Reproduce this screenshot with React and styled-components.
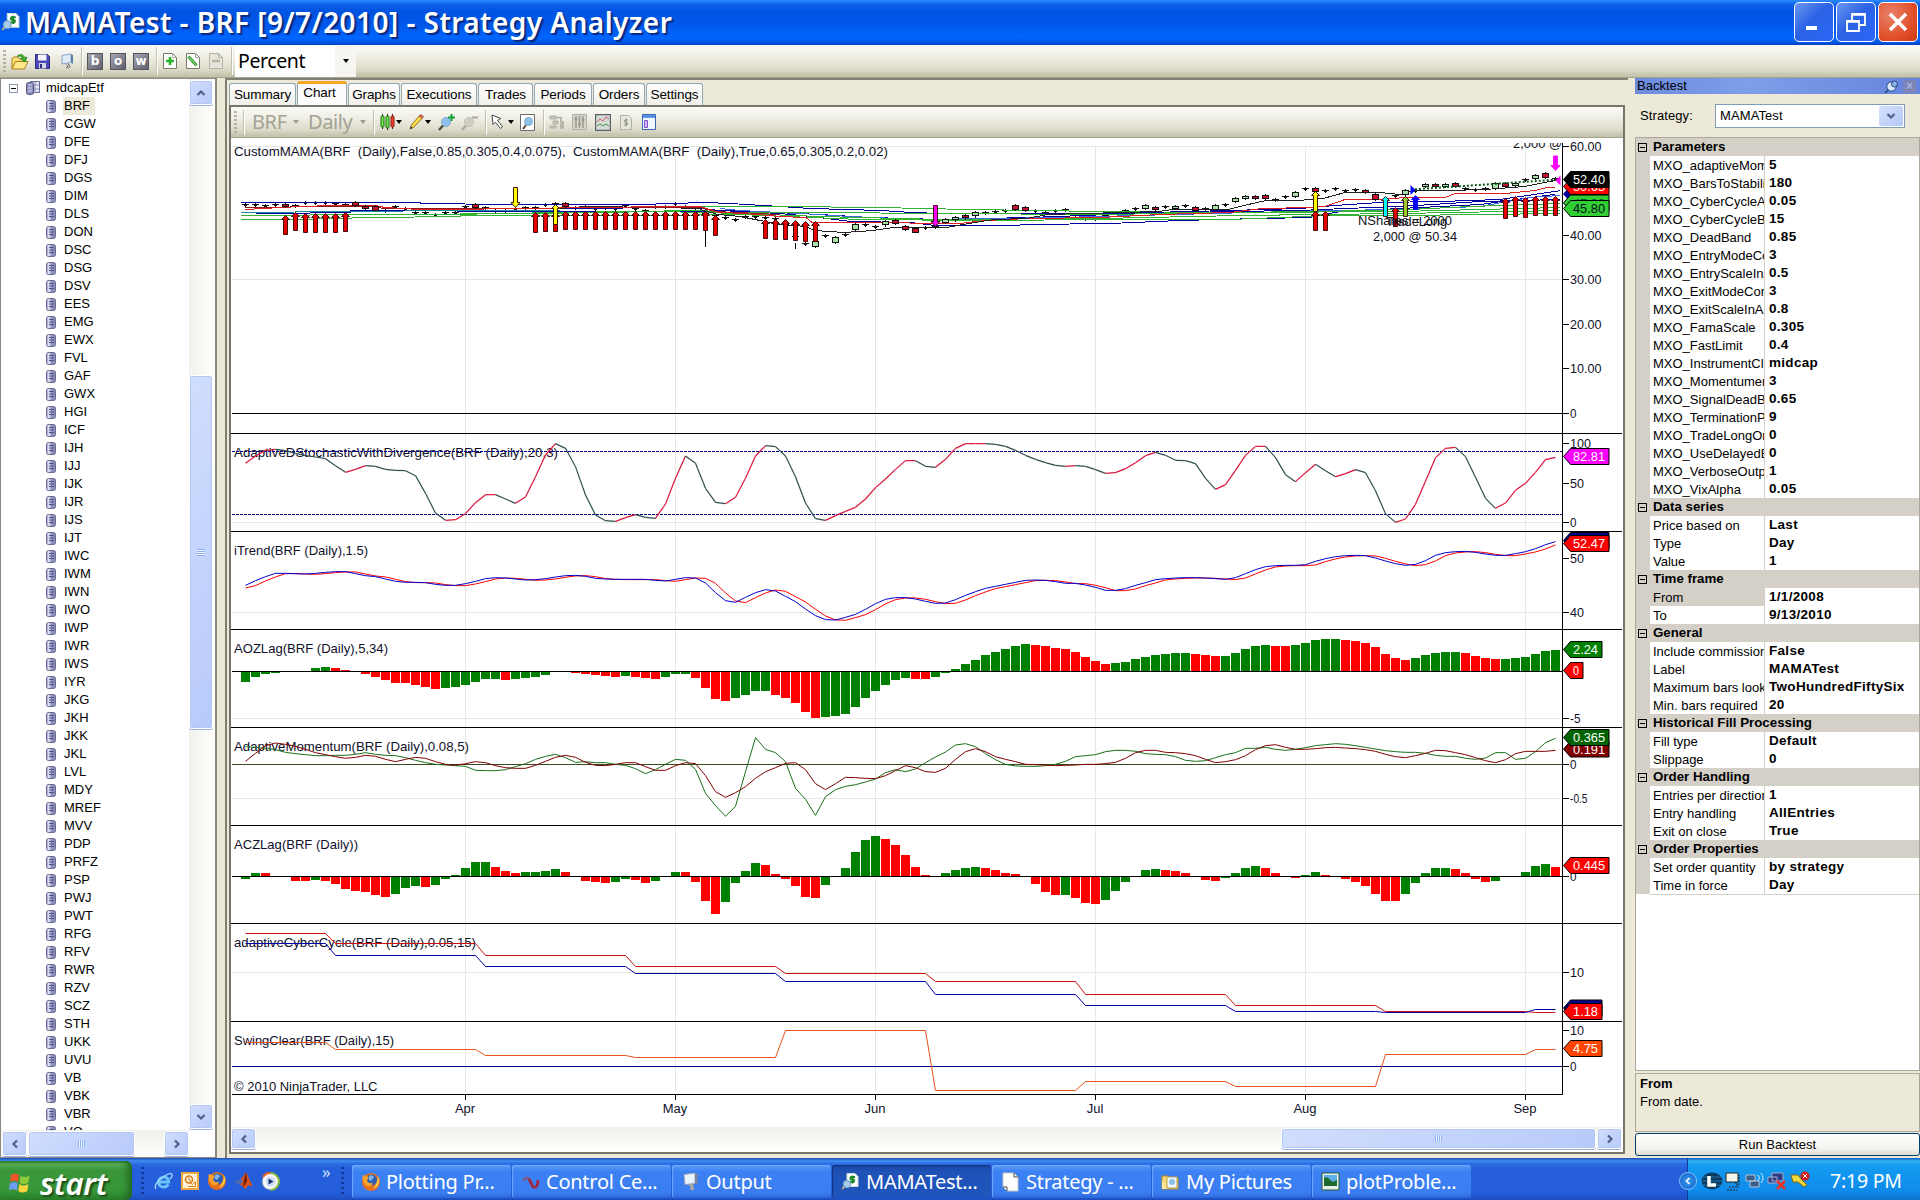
import React from "react"
import styled, { createGlobalStyle, css } from "styled-components"

const SANS = `"Liberation Sans", Arial, sans-serif`
const TAHOMA = `"Noto Sans", "Open Sans", sans-serif`

const GlobalStyle = createGlobalStyle`
  * {
    box-sizing: border-box;
  }

  body {
    margin: 0;
    overflow: hidden;
    background: #ece9d8;
    color: #000;
    font: 13px/18px ${SANS};
  }

  svg {
    display: block;
    flex: none;
  }
`

/* ---------- data ---------- */

const SYMBOLS = `BRF CGW DFE DFJ DGS DIM DLS DON DSC DSG DSV EES EMG EWX FVL GAF GWX HGI ICF
IJH IJJ IJK IJR IJS IJT IWC IWM IWN IWO IWP IWR IWS IYR JKG JKH JKK JKL LVL MDY MREF MVV PDP
PRFZ PSP PWJ PWT RFG RFV RWR RZV SCZ STH UKK UVU VB VBK VBR VO`.split(/\s+/)

const TABS = [
  ["Summary", 68],
  ["Chart", 51],
  ["Graphs", 53],
  ["Executions", 77],
  ["Trades", 56],
  ["Periods", 59],
  ["Orders", 53],
  ["Settings", 58],
]

const PROPERTIES = [
  {
    title: "Parameters",
    rows: [
      ["MXO_adaptiveMomentum", "5"],
      ["MXO_BarsToStabilize", "180"],
      ["MXO_CyberCycleAlpha", "0.05"],
      ["MXO_CyberCycleBars", "15"],
      ["MXO_DeadBand", "0.85"],
      ["MXO_EntryModeCode", "3"],
      ["MXO_EntryScaleInAmt", "0.5"],
      ["MXO_ExitModeControl", "3"],
      ["MXO_ExitScaleInAmt", "0.8"],
      ["MXO_FamaScale", "0.305"],
      ["MXO_FastLimit", "0.4"],
      ["MXO_InstrumentClass", "midcap"],
      ["MXO_Momentumenter", "3"],
      ["MXO_SignalDeadBand", "0.65"],
      ["MXO_TerminationPer", "9"],
      ["MXO_TradeLongOnly", "0"],
      ["MXO_UseDelayedEntry", "0"],
      ["MXO_VerboseOutput", "1"],
      ["MXO_VixAlpha", "0.05"],
    ],
  },
  {
    title: "Data series",
    rows: [
      ["Price based on", "Last"],
      ["Type", "Day"],
      ["Value", "1"],
    ],
  },
  {
    title: "Time frame",
    rows: [
      ["From", "1/1/2008"],
      ["To", "9/13/2010"],
    ],
  },
  {
    title: "General",
    rows: [
      ["Include commission", "False"],
      ["Label", "MAMATest"],
      ["Maximum bars look back", "TwoHundredFiftySix"],
      ["Min. bars required", "20"],
    ],
  },
  {
    title: "Historical Fill Processing",
    rows: [
      ["Fill type", "Default"],
      ["Slippage", "0"],
    ],
  },
  {
    title: "Order Handling",
    rows: [
      ["Entries per direction", "1"],
      ["Entry handling", "AllEntries"],
      ["Exit on close", "True"],
    ],
  },
  {
    title: "Order Properties",
    rows: [
      ["Set order quantity", "by strategy"],
      ["Time in force", "Day"],
    ],
  },
]

// indicator samples, one per bar, in thirds of a pixel
const STOCHASTIC = [
  115, 93, 76, 73, 77, 85, 92, 96, 101, 122, 142, 133, 122, 124, 133, 136, 137, 152, 205, 264, 286,
  284, 266, 233, 209, 209, 222, 235, 216, 155, 90, 56, 70, 125, 210, 270, 287, 289, 278, 269, 277,
  280, 237, 160, 93, 115, 190, 232, 236, 217, 160, 93, 62, 65, 93, 155, 234, 281, 286, 272, 259,
  247, 222, 188, 162, 133, 107, 107, 124, 127, 103, 70, 56, 56, 56, 58, 64, 76, 91, 103, 113, 121,
  124, 122, 124, 134, 145, 143, 131, 113, 92, 82, 91, 106, 107, 116, 160, 193, 179, 136, 91, 64, 64,
  98, 149, 170, 143, 118, 137, 155, 146, 134, 143, 197, 266, 292, 282, 238, 169, 98, 70, 67, 95,
  157, 220, 250, 234, 196, 175, 142, 104, 97,
]

const TREND = [
  481, 467, 455, 445, 445, 446, 447, 445, 442, 440, 440, 446, 452, 455, 462, 469, 472, 472, 473,
  478, 481, 481, 476, 469, 461, 458, 459, 462, 465, 464, 461, 456, 452, 451, 454, 460, 462, 463,
  463, 463, 463, 466, 468, 463, 458, 459, 474, 503, 527, 532, 517, 503, 494, 498, 514, 530, 552,
  572, 584, 585, 577, 568, 553, 536, 523, 518, 518, 522, 529, 535, 534, 524, 511, 500, 490, 484,
  478, 472, 466, 465, 466, 470, 475, 475, 480, 487, 496, 496, 491, 481, 473, 464, 461, 459, 458,
  458, 459, 461, 463, 458, 446, 434, 425, 422, 421, 421, 419, 409, 401, 395, 392, 391, 392, 399,
  408, 416, 421, 418, 407, 391, 383, 380, 379, 382, 387, 391, 391, 386, 380, 371, 359, 350,
]

const AOZ = [
  -31, -15, -7, -4, 0, 0, 4, 11, 14, 11, 5, 0, -7, -15, -25, -34, -34, -40, -46, -52, -49, -46, -40,
  -31, -22, -22, -23, -22, -19, -16, -10, 0, 0, -4, -7, -10, -13, -16, -13, -14, -19, -22, -16, -7,
  -7, -19, -49, -82, -88, -79, -70, -58, -58, -70, -79, -94, -121, -139, -136, -133, -127, -106,
  -79, -58, -40, -25, -19, -20, -20, -16, -4, 8, 23, 35, 50, 59, 68, 77, 83, 82, 77, 71, 68, 59, 44,
  32, 23, 26, 29, 38, 44, 50, 53, 56, 56, 53, 50, 47, 48, 56, 68, 77, 80, 79, 77, 80, 86, 95, 98,
  98, 95, 92, 86, 74, 53, 41, 35, 41, 50, 56, 59, 59, 56, 47, 41, 38, 39, 41, 44, 53, 62, 65,
]

const MOMENTUM = [
  965, 967, 970, 974, 982, 986, 989, 992, 992, 991, 991, 988, 983, 988, 991, 992, 998, 1006, 1013,
  1018, 1020, 1022, 1024, 1036, 1037, 1037, 1034, 1025, 1016, 1003, 994, 988, 998, 1012, 1010, 1013,
  1013, 1018, 1021, 1031, 1046, 1034, 1018, 1003, 1006, 1033, 1105, 1142, 1174, 1144, 1040, 938,
  973, 983, 1010, 1090, 1123, 1171, 1115, 1094, 1084, 1079, 1071, 1062, 1043, 1034, 1040, 1032,
  1013, 996, 981, 960, 956, 965, 986, 1004, 1018, 1023, 1024, 1024, 1022, 1018, 1009, 995, 992, 989,
  980, 976, 976, 979, 986, 988, 989, 995, 1006, 1009, 1007, 998, 989, 983, 970, 970, 967, 973, 976,
  973, 968, 962, 959, 956, 958, 962, 967, 972, 977, 980, 982, 982, 985, 991, 994, 994, 1000, 1003,
  999, 983, 983, 1003, 1000, 980, 953, 940,
]

const MOMENTUM_SIGNAL = [
  1009, 985, 962, 954, 958, 964, 973, 983, 989, 995, 1000, 997, 991, 994, 1003, 1010, 1003, 997,
  1000, 1010, 1018, 1021, 1016, 1010, 1013, 1022, 1028, 1030, 1030, 1021, 1009, 997, 991, 997, 1012,
  1021, 1022, 1018, 1013, 1013, 1025, 1036, 1036, 1022, 1013, 1016, 1052, 1100, 1117, 1103, 1085,
  1060, 1040, 1028, 1015, 1013, 1034, 1076, 1094, 1076, 1057, 1058, 1060, 1061, 1052, 1037, 1022,
  1028, 1040, 1042, 1030, 1003, 980, 971, 980, 995, 1003, 1010, 1018, 1019, 1020, 1022, 1021, 1020,
  1018, 1018, 1016, 1012, 1000, 983, 976, 976, 982, 983, 986, 992, 1003, 1013, 1010, 1004, 992, 974,
  962, 959, 967, 973, 973, 971, 968, 967, 969, 971, 974, 979, 988, 995, 998, 992, 985, 976, 977,
  983, 989, 998, 1007, 1013, 1004, 986, 979, 979, 979, 976,
]

const ACZ = [
  -7, 13, 12, 4, 0, -12, -12, -9, -13, -22, -37, -43, -46, -55, -61, -52, -34, -28, -31, -25, -7, 7,
  26, 44, 44, 31, 19, 13, 14, 14, 19, 25, 16, 0, -12, -16, -19, -16, -7, -10, -19, -13, 0, 16, 15,
  -16, -73, -112, -76, -19, 19, 43, 37, 10, -7, -28, -61, -64, -25, 4, 28, 76, 112, 124, 115, 97,
  67, 31, 7, 4, 13, 22, 28, 31, 28, 22, 13, 10, 0, -22, -46, -55, -54, -64, -79, -82, -70, -43, -16,
  4, 22, 25, 22, 19, 13, 0, -10, -12, -4, 13, 28, 34, 28, 13, 0, -4, 7, 16, 7, 0, -7, -16, -28, -52,
  -73, -73, -52, -19, 13, 28, 28, 25, 13, -7, -16, -13, 0, 4, 16, 34, 40, 31,
]

// stepped series: [first bar, level]
const CYCLE_RED = [[0, 355], [9, 385], [24, 421], [39, 455], [54, 475], [69, 499], [84, 539], [99, 572], [114, 590], [129, 592]]
const CYCLE_BLUE = [[0, 385], [9, 421], [24, 455], [39, 475], [54, 499], [69, 539], [84, 572], [99, 590], [114, 592], [129, 583]]
const SWING = [[0, 683], [9, 704], [24, 721], [39, 727], [54, 647], [69, 826], [84, 799], [99, 815], [114, 718], [129, 704]]

// doji mid prices, one per bar, null where a full candle is drawn
const DOJI = [
  204.7, 204, 205, 204.3, null, 205, 202.7, 202.3, 202, 203.7, 204.3, null, null, null, 210, 206.7,
  208.3, 212.7, 212.7, 214, 212.7, 212, 206.7, null, 207.7, 210, 210, 208, 207.7, 207, 204, 203.3,
  null, 207, 206.3, 208, 207.3, 208, 205.3, 208, 210.3, 206, 206.7, 203.3, 206.7, 210.7, 213, 215,
  217.3, 219.3, 216.3, 216, 217, 218, 224, 236, 243.3, null, 235.3, null, 234.7, null, 224.7, 226,
  null, null, null, null, 227.3, 226, null, null, null, null, 212.3, 211.3, 210.3, null, null,
  210.3, 212.3, 210.3, 209.3, 214, 218.7, 218.7, 215, 212.3, 210, 208.7, null, null, 206.7, null,
  205, null, 208.7, null, 204, null, null, null, null, 199.3, 196.7, null, 188.7, null, 190.3, 188.7,
  190.3, 189, null, null, null, 195, null, 190, null, null, null, null, 188.7, 189.7, 188.3, null,
  null, null, 179.7, null, null, 178.7,
]

// [bar, top, bottom, rising]
const CANDLES = [
  [4, 204, 206, 0], [11, 202.5, 205.5, 0], [12, 206.5, 208.7, 0], [13, 206, 209.5, 0],
  [23, 204, 207.3, 0], [32, 203.5, 206.5, 0], [57, 241.7, 246.7, 1], [59, 237.3, 242.7, 1],
  [61, 224.5, 229.5, 1], [64, 221.7, 225, 1], [65, 220.5, 223.7, 0], [66, 226.7, 229.5, 0],
  [67, 228, 231.7, 0], [70, 219.3, 222.3, 1], [71, 217.7, 220, 1], [72, 215.7, 218, 0],
  [73, 212.7, 216, 1], [77, 205.3, 209.7, 0], [78, 207.3, 210.3, 0], [90, 205.3, 208.3, 1],
  [91, 207.5, 209.7, 0], [93, 206.5, 208.7, 1], [95, 207.3, 210.3, 0], [97, 205.3, 209.3, 1],
  [99, 198.3, 201.7, 1], [100, 196.3, 198.7, 1], [101, 196.3, 198.7, 0], [102, 195.3, 198.7, 0],
  [105, 192.3, 196.7, 1], [107, 188.3, 191.7, 0], [112, 190.3, 192.3, 0], [113, 194.3, 199, 0],
  [116, 190.7, 195, 1], [118, 184.7, 186.7, 1], [119, 184.5, 186.7, 0], [120, 184.5, 186.7, 1],
  [121, 183.3, 186.3, 0], [125, 183.3, 188.3, 1], [126, 183.5, 186.5, 0], [127, 183.5, 185.7, 1],
  [129, 175.3, 178.7, 1], [130, 173.5, 177.3, 0],
]

const PRICE_LINES = [
  ["#0000a0", "241,202.5 420,202.5 421,203.5 509,204.5 640,204.5 705,202.5 730,203.5 780,206.5 811,208.5 881,210.5 912,212.5 942,213.5 1110,213.5 1230,210.5 1300,208.5 1335,205.5 1380,202.5 1440,201.5 1500,199.5 1560,190.7"],
  ["#0000a0", "560,208.5 690,207.5 720,210.5 780,213.5 811,216.5 851,221.5 911,222.5 935,225.5 1010,225.5 1031,224.5 1110,223.5 1180,220.5 1260,218.5 1310,217.5 1340,211.5 1400,208.5 1480,204.5 1555,194.3"],
  ["#0000a0", "241,212.5 270,213.5 350,212.5 351,210.5 560,211.5 700,211.5 731,210.5 820,214.5 870,217.5 940,219.5 1030,217.5 1110,214.5 1230,211.5 1300,210.5 1345,208.5 1400,206.5 1480,201.5 1560,199.5"],
  ["#1e8ca0", "241,212.5 350,211.5 460,210.5 560,210.5"],
  ["#4169e1", "720,208.5 740,210.5 800,213.5 850,216.5 920,219.5 1060,217.5 1290,211.5 1330,210.5 1400,209.5 1480,206.5 1530,197.5 1560,195.5"],
  ["#32b432", "688,206.5 731,206.5 780,206.5 881,207.5 921,208.5 971,209.5 1101,211.5 1223,212.5 1320,211.5 1410,209.5 1470,206.5 1560,203.5"],
  ["#32b432", "450,214.5 560,212.5 700,210.5 731,212.5 820,212.5 940,213.5 1100,214.5 1240,212.5 1400,211.5 1560,207.5"],
  ["#32b432", "241,215.5 380,214.5 540,213.5 660,211.5 740,213.5 820,216.5 940,219.5 1100,218.5 1240,215.5 1400,213.5 1560,210.5"],
  ["#32b432", "241,219.5 300,219.5 370,217.5 460,216.5 461,215.5 660,215.5 740,214.5 860,219.5 980,220.5 1110,219.5 1230,219.5 1330,215.5 1400,215.5 1560,213.5"],
  ["#222222", "560,208.5 585,206.5 660,207.5 700,208.5"],
  ["#8b1a1a", "245,207.5 280,207.5 300,206.5 370,206.5 385,208.5 550,208.5 565,207.5 700,207.5 715,211.5 780,214.5"],
  ["#e02020", "245,209.5 300,206.5 335,205.5 375,205.5 385,207.5 420,209.5 550,208.5 565,207.5 700,206.5 720,212.5 745,213.5 780,216.5 806,217.5 812,222.5 880,222.5 940,223.5 960,223.5 985,220.5 1030,218.5 1100,217.5 1160,214.5 1230,212.5 1262,208.5 1310,207.5 1325,206.5 1345,199.5 1380,199.5 1405,197.5 1445,197.5 1455,193.5 1505,193.5 1535,190.5 1547,187.5 1555,187.5"],
  ["#222222", "700,209.5 718,214.5 740,216.5 780,224.5 806,226.5 814,230.5 844,232.5 873,230.5 894,227.5 946,227.5 975,222.5 994,219.5 1026,218.5 1048,214.5 1083,213.5 1123,212.5 1158,211.5 1173,209.5 1228,209.5 1244,205.5 1266,200.5 1298,200.5 1323,198.5 1345,192.5 1380,192.5 1400,194.5 1415,190.5 1447,190.5 1485,189.5 1525,186.5 1555,180.5"],
]

// [bar, tip, tail, colour]
const UP_ARROWS = [
  [4, 215, 234.7], [5, 212.3, 230.7], [6, 213.3, 232.7], [7, 213.3, 232.7], [8, 213.3, 232.7],
  [9, 213.3, 232.7], [10, 212.3, 231.7], [29, 212.7, 232.7], [30, 212.7, 231.7], [31, 212, 231.7],
  ...Array.from({ length: 14 }, (_, n) => [32 + n, 211, 229.5]),
  [46, 211.5, 230], [47, 215.7, 235.5], [52, 219, 238.7], [53, 219.7, 239.5], [54, 219.3, 239.5],
  [55, 220.5, 240.7], [56, 221.5, 241.7], [57, 221.5, 241.7], [107, 211.5, 230.5],
  [108, 211.5, 230.5], [115, 207, 226.5], [126, 198.5, 218], [127, 196.3, 216.5],
  [128, 197.5, 217.5], [129, 196, 215.3], [130, 196, 215.3], [131, 196, 215.5],
  [31, 204.5, 224.3, "#ffff00"], [107, 191.7, 211.3, "#ffff00"], [114, 196, 216, "#00ffff"],
  [116, 196.5, 216, "#9acd32"], [117, 195.3, 209.3, "#0000ff"],
]

const MONTHS = [["Apr", 22], ["May", 43], ["Jun", 63], ["Jul", 85], ["Aug", 106], ["Sep", 128]]

const AXIS_LABELS = [
  ["60.00", 146.5], ["40.00", 235.5], ["30.00", 279.5], ["20.00", 324.5], ["10.00", 368.5],
  ["0", 413.5], ["100", 443.5], ["50", 483.5], ["0", 522.5], ["50", 558.5], ["40", 612.5],
  ["-5", 718.5], ["0", 764.5], ["-0.5", 798.5], ["0", 876.5], ["10", 972.5], ["10", 1030.5],
  ["0", 1066.5],
]

// [label, centre, right edge, fill, text colour]
const TAGS = [
  ["47.99", 203, 1609, "#32cd32", "#053"],
  ["45.80", 208.5, 1609, "#32cd32", "#012"],
  ["50.63", 186.5, 1609, "#ff0000", "#fff"],
  ["52.40", 179.5, 1609, "#000", "#fff"],
  ["82.81", 456.5, 1609, "#ff00ff", "#fff"],
  ["", 540.5, 1609, "#00008b", "#fff"],
  ["52.47", 543.5, 1609, "#ff0000", "#fff"],
  ["2.24", 649.5, 1602, "#008000", "#fff"],
  ["0", 670.5, 1583, "#ff0000", "#fff"],
  ["0.191", 749, 1609, "#800000", "#fff"],
  ["0.365", 737.5, 1609, "#006400", "#fff"],
  ["0.445", 865.5, 1609, "#ff0000", "#fff"],
  ["", 1008, 1602, "#00008b", "#fff"],
  ["1.18", 1011.5, 1602, "#ff0000", "#fff"],
  ["4.75", 1048.5, 1602, "#ff4500", "#fff"],
]

// [text, baseline, width]
const PANE_TITLES = [
  ["CustomMAMA(BRF\u00a0 (Daily),False,0.85,0.305,0.4,0.075),\u00a0 CustomMAMA(BRF\u00a0 (Daily),True,0.65,0.305,0.2,0.02)", 156, 654],
  ["AdaptiveDStochasticWithDivergence(BRF (Daily),20,3)", 457, 324],
  ["iTrend(BRF (Daily),1.5)", 555, 134],
  ["AOZLag(BRF (Daily),5,34)", 653, 154],
  ["AdaptiveMomentum(BRF (Daily),0.08,5)", 751, 235],
  ["ACZLag(BRF (Daily))", 849, 124],
  ["adaptiveCyberCycle(BRF (Daily),0.05,15)", 947, 242],
  ["SwingClear(BRF (Daily),15)", 1045, 160],
  ["© 2010 NinjaTrader, LLC", 1091, 143.5],
]

/* ---------- chart ---------- */

const barX = i => 245.5 + 10 * i
const snap = y => Math.floor(y) + 0.5
const toPoints = (values, top) => values.map((v, i) => `${barX(i)},${top + v / 3}`).join(" ")

const stepPoints = (steps, top) =>
  steps
    .map(([bar, level], n) => {
      const end = n + 1 < steps.length ? steps[n + 1][0] - 1 : 131
      const y = snap(top + level / 3)
      return `${barX(bar)},${y} ${barX(end)},${y}`
    })
    .join(" ")

function Histogram({ values, base }) {
  let rising = true
  return values.map((v, i) => {
    if (i > 0 && v !== values[i - 1]) rising = v > values[i - 1]
    if (v === 0) return null
    const h = Math.round(Math.abs(v) / 3)
    return (
      <rect
        key={i}
        x={barX(i) - 4.5}
        y={v > 0 ? base - h : base}
        width="9"
        height={h}
        fill={rising ? "#008000" : "#ff0000"}
      />
    )
  })
}

function Stochastic() {
  return STOCHASTIC.slice(1).map((v, i) => (
    <line
      key={i}
      x1={barX(i)}
      y1={425 + STOCHASTIC[i] / 3}
      x2={barX(i + 1)}
      y2={425 + v / 3}
      stroke={v <= STOCHASTIC[i] ? "#dc143c" : "#2f4f4f"}
      strokeWidth="1.2"
    />
  ))
}

function UpArrow({ bar, tip, tail, fill = "#e80000" }) {
  const x = barX(bar)
  const top = snap(tip)
  return (
    <path
      d={`M${x} ${top}l4 4h-2V${snap(tail)}h-4V${top + 4}h-2z`}
      fill={fill}
      stroke={fill === "#0000ff" ? fill : "#300"}
      strokeWidth="0.9"
    />
  )
}

function DownArrow({ bar, top, tip, fill, stroke = "#300" }) {
  const x = barX(bar)
  return (
    <path
      d={`M${x - 2} ${top}h4V${tip - 5}h2.5L${x} ${tip}l-4.5-5h2.5z`}
      fill={fill}
      stroke={stroke}
      strokeWidth="0.9"
    />
  )
}

function Tag({ label, y, right, fill, color }) {
  return (
    <g>
      <path d={`M1563.5 ${y}l7-8H${right}v16H1570.5z`} fill={fill} stroke="#000" />
      {label && (
        <text
          x="1573"
          y={y + 4.5}
          fill={color}
          textLength={right - 1573 - 4}
          lengthAdjust="spacingAndGlyphs"
        >
          {label}
        </text>
      )}
    </g>
  )
}

const ChartSvg = styled.svg`
  background: #fff;

  text {
    font: 13px ${SANS};
  }

  polyline {
    fill: none;
  }
`

function Chart() {
  return (
    <ChartSvg width="1391" height="989" viewBox="231 138 1391 989">
      <g stroke="#e9e8e0">
        {MONTHS.map(([name, bar]) => (
          <line key={name} x1={barX(bar)} x2={barX(bar)} y1="146" y2="1094" />
        ))}
        {[146.5, 279.5, 522.5, 612.5, 718.5, 798.5, 972.5].map(y => (
          <line key={y} x1="232" x2="1562" y1={y} y2={y} />
        ))}
      </g>

      <g fill="#10102a">
        {PANE_TITLES.map(([label, y, width]) => (
          <text key={label} x="234" y={y} textLength={width} lengthAdjust="spacingAndGlyphs">
            {label}
          </text>
        ))}
      </g>

      <g shapeRendering="crispEdges">
        {DOJI.map(
          (y, i) =>
            y && (
              <path
                key={i}
                d={`M${barX(i) - 3.5} ${snap(y)}h7M${barX(i) - 1.5} ${snap(y) + 1}h3M${barX(i)} ${snap(y) - 2}v4`}
                stroke="#111"
              />
            )
        )}
        <path d="M705.5 230v17M795.5 243v6" stroke="#000" />
        {PRICE_LINES.map(([color, points], i) => (
          <polyline key={i} points={points} stroke={color} />
        ))}
        {CANDLES.map(([bar, top, bottom, up]) => (
          <g key={bar} stroke="#111">
            <path d={`M${barX(bar)} ${top - 1.5}V${bottom + 1.5}`} />
            <rect
              x={barX(bar) - 3}
              y={snap(top)}
              width="6"
              height={Math.round(bottom - top)}
              fill={up ? "#a8e0a8" : "#c8102e"}
            />
          </g>
        ))}
      </g>
      <line x1="1415" y1="189.3" x2="1556" y2="179.7" stroke="#0a5c1a" strokeWidth="2" strokeDasharray="2 2" />
      {UP_ARROWS.map(([bar, tip, tail, fill], i) => (
        <UpArrow key={i} bar={bar} tip={tip} tail={tail} fill={fill} />
      ))}
      <DownArrow bar={27} top={187.5} tip={207.5} fill="#ffff00" />
      <DownArrow bar={69} top={205.5} tip={226.5} fill="#ff00ff" />
      <DownArrow bar={131} top={156} tip={170.5} fill="#ff00ff" stroke="#ff00ff" />
      <path d="M1410.5 185v10l5-5z" fill="#0000ff" />
      <path d="M1560.5 175.5v10l-5-5z" fill="#ff00ff" />

      <g fill="#10101a">
        <text x="1358" y="224.5" textLength="94" lengthAdjust="spacingAndGlyphs">NShares = 2000</text>
        <text x="1386" y="225.5" textLength="61" lengthAdjust="spacingAndGlyphs">TradeLong</text>
        <text x="1373" y="241" textLength="84" lengthAdjust="spacingAndGlyphs">2,000 @ 50.34</text>
        <text x="1513" y="147.5" textLength="49" lengthAdjust="spacingAndGlyphs">2,000 @</text>
      </g>
      <rect x="1505" y="138" width="58" height="5" fill="#fff" />

      <path d="M232 451.5H1562M232 514.5H1562" stroke="#00008b" strokeDasharray="3 1" />
      <Stochastic />

      <polyline points={toPoints([488, ...TREND.slice(0, -1)], 425.3)} stroke="#ff0000" />
      <polyline points={toPoints(TREND, 425)} stroke="#0000cd" />

      <Histogram values={AOZ} base={672} />
      <path d="M232 671.5H1562" stroke="#000" />

      <path d="M232 764.5H1562" stroke="#3c4a20" />
      <polyline points={toPoints(MOMENTUM, 425)} stroke="#1a6e1a" />
      <polyline points={toPoints(MOMENTUM_SIGNAL, 425)} stroke="#800000" />

      <Histogram values={ACZ} base={877} />
      <path d="M232 876.5H1562" stroke="#000" />

      <polyline points={stepPoints(CYCLE_RED, 815)} stroke="#d01010" />
      <polyline points={stepPoints(CYCLE_BLUE, 815)} stroke="#0000a8" />

      <path d="M232 1066.5H1562" stroke="#00008b" />
      <polyline points={stepPoints(SWING, 815)} stroke="#e8521a" />

      <g stroke="#000">
        <path d="M232 413.5H1562M232 1094.5H1562.5V143" fill="none" />
        {[433.5, 531.5, 629.5, 727.5, 825.5, 923.5, 1021.5].map(y => (
          <line key={y} x1="231" x2="1622" y1={y} y2={y} />
        ))}
        {AXIS_LABELS.map(([, y]) => (
          <line key={y} x1="1562" x2="1569" y1={y} y2={y} />
        ))}
        {MONTHS.map(([name, bar]) => (
          <line key={name} x1={barX(bar)} x2={barX(bar)} y1="1094" y2="1100" />
        ))}
      </g>
      <g fill="#10102a">
        {AXIS_LABELS.map(([label, y]) => (
          <text
            key={y}
            x="1570"
            y={y + 4.5}
            textLength={label.length > 1 ? label.replace(/[.-]/g, "").length * 7 + (/[.-]/.test(label) ? 3.5 : 0) : 6.5}
            lengthAdjust="spacingAndGlyphs"
          >
            {label}
          </text>
        ))}
        {MONTHS.map(([name, bar]) => (
          <text key={name} x={barX(bar) - 0.5} y="1113" textAnchor="middle">
            {name}
          </text>
        ))}
      </g>
      <path d="M1563 194l9-10v20z" fill="#0000a0" />
      {TAGS.map(([label, y, right, fill, color]) => (
        <Tag key={`${label}${y}`} label={label} y={y} right={right} fill={fill} color={color} />
      ))}
    </ChartSvg>
  )
}

/* ---------- icons ---------- */

const DbIcon = () => (
  <svg width="10" height="13" viewBox="0 0 10 13">
    <rect x=".5" y=".5" width="9" height="12" rx="2" fill="#8d8fc0" stroke="#6a6a8c" />
    <rect x="1.5" y="1" width="3" height="11" fill="#d8daf4" />
    <path d="M3 3.5h5M3 6h5M3 8.5h5" stroke="#54557e" />
  </svg>
)

const FolderDbIcon = () => (
  <svg width="14" height="14" viewBox="0 0 14 14">
    <path d="M4.5.5h9v11h-9z" fill="#e6e8f6" stroke="#6a6a8c" />
    <path d="M9 1v11M4 4h9M4 8h9" stroke="#8d8fb8" />
    <rect x=".5" y="1.5" width="7" height="12" rx="2" fill="#8d8fc0" stroke="#55567a" />
    <path d="M2 4h4M2 7h4M2 10h4" stroke="#d8daf4" />
  </svg>
)

const OpenIcon = () => (
  <svg width="18" height="17" viewBox="0 0 18 17">
    <path d="M1 16V5.5l2-1.5h4l1.5 2H14v3" fill="#fbe27a" stroke="#a87e16" />
    <path d="M1 16l3.5-7.5H17L13.5 16z" fill="#ffe98a" stroke="#a87e16" />
    <path d="M6 3.5C9 .5 12 1 13.5 4.5L16 4l-2 5-4.5-3 2-.8C10 3 8.500 2.500 6 3.500z" fill="#3cb52c" stroke="#1c7a12" strokeWidth=".7" />
  </svg>
)

const SaveIcon = () => (
  <svg width="15" height="15" viewBox="0 0 15 15">
    <path d="M.5.5h12l2 2v12H.5z" fill="#4b49b8" stroke="#2b2a7c" />
    <path d="M3 .5h8.500v6H3z" fill="#f4f4ff" />
    <path d="M4 9h7v5.500H4z" fill="#d5d6e6" />
    <path d="M5 10h2v4H5z" fill="#2b2a7c" />
  </svg>
)

const MonitorIcon = () => (
  <svg width="14" height="16" viewBox="0 0 14 16">
    <path d="M2 2.500L11 1v8.500L2 11z" fill="#dfeafa" stroke="#8aa4c4" />
    <path d="M11 1l2 1v9l-2-1.500z" fill="#5a7ea8" />
    <path d="M6 11.500l2 2-2 1.500M8 10.500l2 3-2 2" fill="none" stroke="#555" />
  </svg>
)

const DocIcon = ({ kind }) => (
  <svg width="14" height="16" viewBox="0 0 14 16">
    <path d="M.5.5h9l4 4v11H.5z" fill={kind === "minus" ? "#e6e5da" : "#fff"} stroke={kind === "minus" ? "#b4b3a6" : "#77776c"} />
    <path d="M9.500.5v4h4" fill="none" stroke="#aaa" />
    {kind === "plus" && <path d="M7 4v8M3 8h8" stroke="#28b428" strokeWidth="2.600" />}
    {kind === "edit" && <path d="M2.500 3.500l8 9" stroke="#2e9a2e" strokeWidth="3" />}
    {kind === "edit" && <path d="M3 4l7 8" stroke="#a8e890" />}
    {kind === "minus" && <path d="M3 8h8" stroke="#b4b3a6" strokeWidth="2.600" />}
  </svg>
)

const CandlesIcon = () => (
  <svg width="15" height="18" viewBox="0 0 15 18">
    <path d="M2.500 1v15M7.500 1v16M12.500 1v15" stroke="#222" />
    <rect x="1" y="3" width="3" height="11" rx="1" fill="#6fe84a" stroke="#1c6a12" />
    <rect x="6" y="3" width="3" height="12" rx="1" fill="#6fe84a" stroke="#1c6a12" />
    <rect x="11" y="3" width="3" height="11" rx="1" fill="#f0402c" stroke="#8a1a10" />
  </svg>
)

const PencilIcon = () => (
  <svg width="15" height="16" viewBox="0 0 15 16">
    <path d="M1 15l1.500-4L10.500 1.500l3 2.500L5 13z" fill="#ffd84a" stroke="#7a5a0c" strokeWidth=".8" />
    <path d="M10 2l3 2.500 1.500-2L12 .5z" fill="#e86a50" stroke="#7a3a2c" strokeWidth=".6" />
    <path d="M1 15l.8-2.500L3.500 14z" fill="#222" />
  </svg>
)

const LensIcon = ({ sign, off }) => (
  <svg width="17" height="17" viewBox="0 0 17 17">
    <path d="M1 16l4.500-5" stroke={off ? "#aaa99c" : "#54483c"} strokeWidth="2.400" />
    <circle cx="8" cy="8" r="4.500" fill={off ? "#d0cfc4" : "#8fc0e8"} stroke={off ? "#c4c3b8" : "#7cacd0"} />
    <path d={sign === "+" ? "M13.500 0v7M10 3.500h7" : "M11 3.500h6"} stroke={off ? "#aaa99c" : "#12a03c"} strokeWidth="2" />
  </svg>
)

const CursorIcon = () => (
  <svg width="14" height="16" viewBox="0 0 14 16">
    <path d="M1 1l1 9.500 2.300-2.300L9.500 14.500l2-1.800L6.500 6.500l3.300-2z" fill="#fff" stroke="#444" />
  </svg>
)

const DataBoxIcon = () => (
  <svg width="15" height="17" viewBox="0 0 15 17">
    <path d="M.5.5h14v16H.5z" fill="#fff" stroke="#6a6a6a" />
    <path d="M3 15l3-4" stroke="#54483c" strokeWidth="2" />
    <circle cx="8.500" cy="7.500" r="4" fill="#8fc0e8" stroke="#7cacd0" />
  </svg>
)

const AlignIcon = () => (
  <svg width="15" height="16" viewBox="0 0 15 16">
    <path d="M1 2h6v3H1zM4 7h5v3H4zM1 12h6v2H1z" fill="#c6c5ba" stroke="#b0afa4" />
    <path d="M7 3.500h5V14h2V7" fill="none" stroke="#b0afa4" strokeWidth="1.600" />
  </svg>
)

const SlidersIcon = () => (
  <svg width="15" height="16" viewBox="0 0 15 16">
    <path d="M.5.5h14v15H.5z" fill="#d6d5ca" stroke="#b0afa4" />
    <path d="M4 2v12M7.500 2v12M11 2v12M2.500 5h3M6 10h3M9.500 6h3" stroke="#96958a" strokeWidth="1.400" />
  </svg>
)

const GraphIcon = () => (
  <svg width="16" height="17" viewBox="0 0 16 17">
    <path d="M.5.5h15v16H.5z" fill="#d4dad6" stroke="#5c6268" strokeWidth="1.400" />
    <path d="M2 8l3-3 3 2 3-4 3 2" fill="none" stroke="#d85a6a" />
    <path d="M2 12l3-2 3 2 3-2 3 2" fill="none" stroke="#3c9a4c" />
  </svg>
)

const DollarIcon = () => (
  <svg width="12" height="15" viewBox="0 0 12 15">
    <path d="M.5.5h8l3 3v11H.5z" fill="#e8e7dc" stroke="#b0afa4" />
    <path d="M8 5H5q-1.500 1.200 0 2.500h2q1.500 1.200 0 2.500H4M6 3.500v8" fill="none" stroke="#8c8b80" />
  </svg>
)

const LayoutIcon = () => (
  <svg width="14" height="16" viewBox="0 0 14 16">
    <path d="M.5.5h13v15H.5z" fill="#f2f6ff" stroke="#3c64b4" />
    <path d="M1 2.500h12" stroke="#3c82e0" strokeWidth="2.500" />
    <path d="M2.500 6.500h3v7h-3z" fill="#d0b8f8" stroke="#7a50d0" />
  </svg>
)

const AppIcon = ({ size = 17 }) => (
  <svg width={size} height={size} viewBox="0 0 17 17">
    <path d="M5 .5h8l3 3v10H5z" fill="#fff" stroke="#d4dcd4" />
    <path d="M13 4h-4q-1.500 1.500 0 2.500h2.500q1.500 1.300 0 2.500H8M10.500 2.500v8" fill="none" stroke="#1c8a2c" strokeWidth="1.800" />
    <path d="M0 16l3-3" stroke="#b8a890" strokeWidth="2" />
    <circle cx="5" cy="11" r="3.700" fill="#a8cdea" stroke="#6a9cc4" />
  </svg>
)

const FirefoxIcon = () => (
  <svg width="20" height="20" viewBox="0 0 20 20">
    <circle cx="10" cy="10" r="9" fill="#e8701a" />
    <circle cx="10.500" cy="8" r="5.500" fill="#2c5fb4" />
    <path d="M8 4q3-2 5 1l-3 4-2-1z" fill="#7cb4ec" />
    <path d="M1.500 3q2.500 1 4.500 1l2 2-2 2q1 4 6 3-1 4-6 3Q1 11 1.500 3z" fill="#f8a02c" />
    <path d="M17 4q4 9-5 13 5-6 5-13z" fill="#fcd04a" />
  </svg>
)

const IeIcon = () => (
  <svg width="19" height="19" viewBox="0 0 19 19" fill="none">
    <path d="M14.500 12.500Q12 15.500 8.500 15 4.500 14 4.500 10T9.500 5q5 .3 5.200 5H6" stroke="#6cc4fa" strokeWidth="2.800" />
    <path d="M2 17Q-1 13 8 6t10-3q1 1-2 4" stroke="#a8dcfc" strokeWidth="1.300" />
  </svg>
)

const OutlookIcon = () => (
  <svg width="18" height="18" viewBox="0 0 18 18">
    <path d="M1 1h16v16H1z" fill="#fff4d8" stroke="#f0a83c" strokeWidth="2" />
    <circle cx="8" cy="7.500" r="3.500" fill="none" stroke="#d87a10" strokeWidth="1.500" />
    <path d="M8 5.500v2.500l2 1M7 14.500h7.500v-5M8 10l3.500 2.500L14 10" fill="none" stroke="#d87a10" />
  </svg>
)

const MatlabIcon = () => (
  <svg width="18" height="18" viewBox="0 0 18 18">
    <path d="M0 10l6-3 5-7 7 15-4-2-4 4-4-4z" fill="#d8501a" />
    <path d="M0 10l6-3 2 2-3 4z" fill="#4a6cb8" />
    <path d="M11 0l1 9-4 7 1-8z" fill="#6a1a10" />
  </svg>
)

const MediaIcon = () => (
  <svg width="19" height="19" viewBox="0 0 19 19">
    <circle cx="9.500" cy="9.500" r="8.500" fill="#f4f6fa" stroke="#5a86a8" />
    <path d="M9.500 1a8.500 8.500 0 010 17" fill="none" stroke="#88b83c" strokeWidth="2" />
    <path d="M9.500 1A8.500 8.500 0 002 5" fill="none" stroke="#e8641a" strokeWidth="2" />
    <circle cx="9.500" cy="9.500" r="5" fill="#d0def4" />
    <path d="M7.500 6.500v6l5-3z" fill="#14306c" />
  </svg>
)

const NinjaIcon = () => (
  <svg width="18" height="18" viewBox="0 0 18 18" fill="none">
    <path d="M2 8q1-5 5-2l2 4" stroke="#7c5a8c" strokeWidth="2.500" />
    <path d="M7 6l4 8q5 2 5-7" stroke="#a02a44" strokeWidth="2.800" />
  </svg>
)

const OutputIcon = () => (
  <svg width="17" height="19" viewBox="0 0 17 19">
    <path d="M2 2.500L13 1v10.500L3 12.500z" fill="#eaf2fc" stroke="#9aa6b8" />
    <path d="M13 1l2.500 1v9.500L13 11.500z" fill="#7a8698" />
    <path d="M6 12.500l3 2.500-1 3h4l-1-6z" fill="#b0a898" />
  </svg>
)

const PageIcon = () => (
  <svg width="17" height="20" viewBox="0 0 17 20">
    <path d="M1 1h11l4 4v14H5l-4-4z" fill="#fff" stroke="#c8c8c0" />
    <path d="M12 1v4h4M1 15h4v4" fill="none" stroke="#444" />
  </svg>
)

const PicturesIcon = () => (
  <svg width="19" height="18" viewBox="0 0 19 18">
    <path d="M1 3h6l2 2h8v11H1z" fill="#f8d878" stroke="#b08a2c" />
    <path d="M6 4h10v11H6z" fill="#eef6ff" stroke="#c4a048" />
    <circle cx="11" cy="9" r="3" fill="#8cc0e8" />
    <path d="M1 7l5 9h-5z" fill="#fce8a0" />
  </svg>
)

const ImageIcon = () => (
  <svg width="19" height="19" viewBox="0 0 19 19">
    <path d="M1 1h17v17H1z" fill="#e4f0e8" stroke="#2c5a3c" />
    <path d="M3 3h13v11H3z" fill="#5cb0e8" />
    <path d="M3 6q4-2 6 2l3 2 4-2v6H3z" fill="#1c6a2c" />
  </svg>
)

const WindowsFlag = () => (
  <svg width="24" height="24" viewBox="0 0 24 24">
    <path d="M3 4q4-3 8 0l-1 7q-4-3-8 0z" fill="#f0562c" />
    <path d="M12.500 4.500q4 3 9 0l-1 7q-5 3-9 0z" fill="#8ccc3c" />
    <path d="M1.800 12.500q4-3 8 0l-1 7q-4-3-8 0z" fill="#6c9cf4" />
    <path d="M11.300 13q4 3 9 0l-1 7q-5 3-9 0z" fill="#fcd43c" />
  </svg>
)

const Chevron = ({ dir }) => {
  const turn = { up: 0, right: 90, down: 180, left: 270 }[dir]
  return (
    <svg width="10" height="10" viewBox="0 0 10 10">
      <path d="M1.500 7L5 3.500 8.500 7" fill="none" stroke="#4d6185" strokeWidth="2.200" transform={`rotate(${turn} 5 5)`} />
    </svg>
  )
}

const PinIcon = () => (
  <svg width="15" height="15" viewBox="0 0 15 15">
    <path d="M1 14l4-4" stroke="#23427c" strokeWidth="1.500" />
    <circle cx="7.500" cy="7.500" r="4.700" fill="#d8e8fc" stroke="#23427c" />
    <circle cx="10.500" cy="5" r="3" fill="#8ab4ec" stroke="#23427c" />
  </svg>
)

/* ---------- layout ---------- */

const Screen = styled.div`
  display: flex;
  flex-direction: column;
  width: 1920px;
  height: 1200px;
`

const TitleBar = styled.div`
  display: flex;
  align-items: center;
  flex: none;
  height: 45px;
  padding: 0 2px 1px 2px;
  background: linear-gradient(#2a8cff 0, #0b5fe8 5px, #0053e0 12px, #0058ec 26px, #0066ff 38px, #0059e8 42px, #003fc0 45px);
`

const WindowTitle = styled.h1`
  flex: 1;
  margin: 0 0 1px 5px;
  color: #fff;
  font: 600 28px/40px ${TAHOMA};
  letter-spacing: 0.45px;
  text-shadow: 2px 2px 1px #0a2a80;
  white-space: nowrap;
`

const WindowButton = styled.div`
  display: flex;
  align-items: center;
  justify-content: center;
  width: 40px;
  height: 40px;
  margin-left: 2px;
  border: 1.5px solid #fff;
  border-radius: 5px;
  background: ${p =>
    p.$close
      ? "radial-gradient(circle at 30% 30%, #e8826a, #e2512c 60%, #c83810)"
      : "linear-gradient(135deg, #6a96f0, #2c62e4 45%, #2a68f8)"};
`

const Toolbar = styled.div`
  display: flex;
  align-items: center;
  flex: none;
  height: ${p => p.$height}px;
  padding-left: ${p => p.$pad}px;
  background: linear-gradient(#fbfaf6, #f0efe6 35%, #dddccb 75%, #c0bfa6);
  border-bottom: 1px solid #a5a48c;
`

const Slot = styled.div`
  flex: none;
  width: ${p => p.$w}px;
  margin-left: ${p => p.$ml}px;
`

const Grip = styled.div`
  width: 3px;
  height: 23px;
  background: repeating-linear-gradient(#b4b2a0 0 2px, transparent 2px 4px);
`

const Separator = styled.div`
  width: 2px;
  height: ${p => p.$h || 28}px;
  margin-left: ${p => p.$ml}px;
  border-left: 1px solid #c2c1ae;
  background: #fff;
`

const LetterKey = styled.div`
  width: 16px;
  height: 17px;
  margin-left: ${p => p.$ml}px;
  border: 1px solid #54555e;
  background: linear-gradient(135deg, #a6a7b0, #5e5f70);
  color: #fff;
  font: bold 12px/14px "DejaVu Sans", sans-serif;
  text-align: center;
`

const PercentCombo = styled.div`
  display: flex;
  align-items: center;
  justify-content: space-between;
  width: 121px;
  height: 32px;
  margin-left: 2px;
  padding: 0 7px 0 3px;
  background: linear-gradient(90deg, #fff 100px, #f6f5ef 100px);
  font: 19.5px/30px ${TAHOMA};
  letter-spacing: -0.4px;
`

const Arrow = styled.i`
  width: 0;
  margin-left: ${p => p.$ml || 0}px;
  border: 3.5px solid transparent;
  border-top: 4px solid ${p => (p.$off ? "#9d9c8e" : "#000")};
  border-bottom: 0;
`

const DimLabel = styled.span`
  width: ${p => p.$w}px;
  margin-left: ${p => p.$ml}px;
  color: #a3a294;
  font: 20px/28px ${TAHOMA};
  letter-spacing: -0.4px;
  white-space: nowrap;
`

const Body = styled.div`
  display: flex;
  flex: 1;
  min-height: 0;
`

const TreePanel = styled.div`
  display: grid;
  grid-template: 1051px 27px / 188px 26px;
  width: 217px;
  border: 1px solid #8a8a80;
  border-width: 1px 2px 1px 1px;
  background: #fff;
`

const TreeList = styled.div`
  overflow: hidden;
`

const TreeRoot = styled.div`
  display: flex;
  align-items: center;
  height: 18px;
  padding-left: 8px;

  svg {
    margin: 0 6px 0 8px;
  }
`

const Toggle = styled.span`
  width: 9px;
  height: 9px;
  border: 1px solid ${p => (p.$dark ? "#000" : "#8a98ac")};

  &::after {
    content: "";
    display: block;
    height: 1px;
    margin: 3px 1px 0;
    background: #000;
  }
`

const TreeItem = styled.div`
  display: flex;
  align-items: center;
  height: 18px;
  padding-left: 45px;

  span {
    margin-left: 7px;
    padding: 0 5px 0 1px;
    background: ${p => (p.$selected ? "#ece9d8" : "none")};
  }
`

const ScrollTrack = styled.div`
  display: flex;
  flex-direction: ${p => (p.$vertical ? "column" : "row")};
  align-items: stretch;
  min-width: 0;
  padding: ${p => (p.$vertical ? "1px 2px 1px 0" : "1px 0")};
  background: ${p => (p.$vertical ? "linear-gradient(90deg, #f3f1ec, #fefefb)" : "linear-gradient(#f0efea, #fefefb)")};
`

const ScrollPart = styled.div`
  display: flex;
  align-items: center;
  justify-content: center;
  flex: none;
  width: ${p => (p.$w ? `${p.$w}px` : "auto")};
  height: ${p => (p.$h ? `${p.$h}px` : "auto")};
  margin-top: ${p => p.$mt || 0}px;
  margin-left: ${p => p.$ml || 0}px;
  border: 1px solid #fff;
  border-radius: 3px;
  background: linear-gradient(135deg, #d0defe, #b8cafa);
  box-shadow: inset 0 0 0 1px #b4c8f4, 0 1px 0 #98b0e0;
`

const Ridges = styled.span`
  width: ${p => (p.$vertical ? 8 : 7)}px;
  height: 7px;
  background: repeating-linear-gradient(${p => (p.$vertical ? "0deg" : "90deg")}, #8cb0f8 0 1px, #eef4fe 1px 2px);
`

const Spacer = styled.div`
  flex: 1;
`

const Splitter = styled.div`
  width: 8px;
  background: #ece9d8;
`

const ChartArea = styled.div`
  display: flex;
  flex-direction: column;
  width: 1403px;
  padding: 1px 0 0 2px;
  border-left: 2px solid #808074;
  border-top: 2px solid #808074;
`

const TabStrip = styled.div`
  display: flex;
  align-items: flex-end;
  height: 24px;
`

const Tab = styled.div`
  width: ${p => p.$w - 1}px;
  height: ${p => (p.$active ? 24 : 22)}px;
  margin-right: 1px;
  border: 1px solid #91a7b4;
  border-bottom: 0;
  border-radius: 3px 3px 0 0;
  background: linear-gradient(#fff, #f0efe8);
  font-size: 13.5px;
  line-height: 22px;
  text-align: center;
  letter-spacing: -0.1px;
  white-space: nowrap;

  ${p =>
    p.$active &&
    css`
      padding-right: 5px;
      border-top: 3px solid #f5a623;
      background: #fcfcfe;
      line-height: 17px;
    `}
`

const ChartFrame = styled.div`
  display: flex;
  flex-direction: column;
  width: 1396px;
  height: 1049px;
  border: 2px solid #75756b;
  background: #fff;
`

const HorizontalScroll = styled(ScrollTrack)`
  height: 23px;
  width: 1391px;
`

const SidePanel = styled.div`
  display: flex;
  flex-direction: column;
  width: 285px;
  margin-left: 7px;
`

const PanelHeader = styled.div`
  display: flex;
  align-items: center;
  gap: 4px;
  height: 16px;
  padding: 0 4px 0 2px;
  background: linear-gradient(90deg, #6d8ce0, #7d9fe8 40%, #6584de);
`

const CloseBox = styled.span`
  width: 13px;
  height: 13px;
  background: #7d85b8;
  color: #aab4dc;
  font: bold 12px/13px ${SANS};
  text-align: center;
`

const StrategyRow = styled.div`
  display: flex;
  align-items: center;
  height: 43px;
  padding-left: 5px;
`

const StrategyLabel = styled.span`
  width: 75px;
  letter-spacing: 0.1px;
`

const Select = styled.div`
  display: flex;
  align-items: center;
  justify-content: space-between;
  width: 190px;
  height: 24px;
  padding: 1px 1px 1px 4px;
  border: 1px solid #7f9db9;
  background: #fff;
  letter-spacing: 0.1px;

  span {
    display: flex;
    align-items: center;
    justify-content: center;
    width: 24px;
    height: 20px;
    border-radius: 2px;
    background: linear-gradient(135deg, #d4e0fd, #b4c8f6);
  }
`

const PropertyGrid = styled.div`
  height: 934px;
  border: 1px solid #aca899;
  background: #fff;
`

const Category = styled.div`
  display: flex;
  align-items: center;
  gap: 6px;
  height: 18px;
  padding-left: 2px;
  background: #d4d0c8;
  font-weight: bold;
  font-size: 13.3px;
`

const PropertyRow = styled.div`
  display: grid;
  grid-template-columns: 14px 115px 1fr;
  height: 18px;
  background: #d4d0c8;
`

const PropertyName = styled.div`
  overflow: hidden;
  padding-left: 3px;
  border-right: 1px solid #d4d0c8;
  border-bottom: 1px solid #d4d0c8;
  background: ${p => (p.$selected ? "#d4d0c8" : "#fff")};
  line-height: 19px;
  white-space: nowrap;
`

const PropertyValue = styled.div`
  padding-left: 4px;
  border-bottom: 1px solid #d4d0c8;
  background: #fff;
  font-weight: bold;
  font-size: 13.5px;
  letter-spacing: 0.3px;
`

const HelpBox = styled.div`
  height: 59px;
  margin: 2px 0 1px;
  padding: 1px 4px;
  border: 1px solid #aca899;
`

const RunButton = styled.button`
  height: 23px;
  padding: 0;
  border: 1px solid #003c74;
  border-radius: 3px;
  background: linear-gradient(#fff, #f4f3ee 70%, #dedbd0);
  color: #000;
  font: 13px ${SANS};
`

const TaskbarRoot = styled.div`
  display: flex;
  flex: none;
  height: 42px;
  background: linear-gradient(#1c4fb4 0, #3f8cf3 3px, #2a6ae0 6px, #245edb 12px, #245edb 34px, #1d4ec0 42px);
`

const StartButton = styled.div`
  display: flex;
  align-items: center;
  width: 132px;
  height: 39px;
  margin-top: 3px;
  padding: 5px 0 0 8px;
  gap: 8px;
  border-radius: 0 6px 6px 0;
  background: linear-gradient(#2c7a2c 0, #58b058 3px, #3a963a 9px, #389838 28px, #2c842c);
  box-shadow: inset -6px 0 8px -3px #1c5c1c;
  color: #fff;
  font: italic 600 31px/30px ${TAHOMA};
  letter-spacing: -0.3px;
  text-shadow: 2px 2px 2px #1c4a1c;
`

const QuickLaunch = styled.div`
  display: flex;
  align-items: center;
  width: 220px;
  padding: 4px 0 0 9px;
  color: #cfe2ff;

  svg {
    margin-right: 8px;
  }

  > div + svg {
    margin-left: 10px;
  }
`

const DarkGrip = styled.div`
  width: 3px;
  height: 28px;
  background: repeating-linear-gradient(#143a9c 0 2px, transparent 2px 5px);
`

const More = styled.span`
  margin: -18px 10px 0 34px;
  font: 17px/16px ${TAHOMA};
`

const Task = styled.div`
  display: flex;
  align-items: center;
  gap: 6px;
  width: 159px;
  height: 33px;
  margin: 7px 1px 0 0;
  padding-left: 9px;
  border-radius: 3px;
  background: ${p => (p.$active ? "linear-gradient(#1a44a0, #1e52b7 20%, #1f55bd)" : "linear-gradient(#5f9cfb, #3c81f3 20%, #3a7df0 85%, #2a66d8)")};
  box-shadow: inset 1px 1px 1px ${p => (p.$active ? "#12327c" : "#6fa8ff")};
  color: #fff;
  font: 20px/30px ${TAHOMA};
  letter-spacing: -0.25px;
  white-space: nowrap;
`

const TaskIcon = styled.span`
  display: flex;
  justify-content: center;
  width: 19px;
`

const Tray = styled.div`
  display: flex;
  align-items: center;
  gap: 4px;
  width: 233px;
  margin-left: auto;
  padding-top: 3px;
  border-left: 1px solid #0c3c98;
  background: linear-gradient(#0c5cc0 0, #35b0f4 3px, #149cf0 7px, #0f8cec 32px, #0c74cc);
`

const Clock = styled.span`
  flex: none;
  margin-left: -13px;
  color: #fff;
  font: 19.5px/30px ${TAHOMA};
  letter-spacing: -0.2px;
  white-space: nowrap;
`

const Collapse = styled.span`
  display: flex;
  align-items: center;
  justify-content: center;
  flex: none;
  width: 18px;
  height: 18px;
  margin-left: -9px;
  border: 1px solid #7cc4f8;
  border-radius: 50%;
  background: radial-gradient(#3c9cf0, #0c5cc8);
`

function MainToolbar() {
  return (
    <Toolbar $height={33} $pad={3}>
      <Grip />
      <Slot $w={18} $ml={5}><OpenIcon /></Slot>
      <Slot $w={15} $ml={6}><SaveIcon /></Slot>
      <Slot $w={14} $ml={10}><MonitorIcon /></Slot>
      <Separator $ml={7} />
      <LetterKey $ml={4}>b</LetterKey>
      <LetterKey $ml={7}>o</LetterKey>
      <LetterKey $ml={7}>w</LetterKey>
      <Separator $ml={7} />
      <Slot $w={14} $ml={5}><DocIcon kind="plus" /></Slot>
      <Slot $w={14} $ml={9}><DocIcon kind="edit" /></Slot>
      <Slot $w={14} $ml={9}><DocIcon kind="minus" /></Slot>
      <Separator $ml={8} />
      <PercentCombo>
        Percent
        <Arrow />
      </PercentCombo>
    </Toolbar>
  )
}

function ChartToolbar() {
  return (
    <Toolbar $height={31} $pad={3}>
      <Grip />
      <Separator $ml={6} $h={25} />
      <DimLabel $ml={7} $w={41}>BRF</DimLabel>
      <Arrow $off />
      <DimLabel $ml={9} $w={52}>Daily</DimLabel>
      <Arrow $off />
      <Separator $ml={7} $h={25} />
      <Slot $w={15} $ml={5}><CandlesIcon /></Slot>
      <Arrow $ml={1} />
      <Slot $w={15} $ml={7}><PencilIcon /></Slot>
      <Arrow $ml={1} />
      <Slot $w={17} $ml={7}><LensIcon sign="+" /></Slot>
      <Slot $w={17} $ml={6}><LensIcon sign="-" off /></Slot>
      <Separator $ml={7} $h={25} />
      <Slot $w={14} $ml={4}><CursorIcon /></Slot>
      <Arrow $ml={3} />
      <Slot $w={15} $ml={6}><DataBoxIcon /></Slot>
      <Separator $ml={8} $h={25} />
      <Slot $w={15} $ml={4}><AlignIcon /></Slot>
      <Slot $w={15} $ml={8}><SlidersIcon /></Slot>
      <Slot $w={16} $ml={8}><GraphIcon /></Slot>
      <Slot $w={12} $ml={9}><DollarIcon /></Slot>
      <Slot $w={14} $ml={10}><LayoutIcon /></Slot>
    </Toolbar>
  )
}

function Tree() {
  return (
    <TreePanel>
      <TreeList>
        <TreeRoot>
          <Toggle />
          <FolderDbIcon />
          midcapEtf
        </TreeRoot>
        {SYMBOLS.map(symbol => (
          <TreeItem key={symbol} $selected={symbol === "BRF"}>
            <DbIcon />
            <span>{symbol}</span>
          </TreeItem>
        ))}
      </TreeList>
      <ScrollTrack $vertical>
        <ScrollPart $h={25}><Chevron dir="up" /></ScrollPart>
        <ScrollPart $mt={270} $h={354}><Ridges $vertical /></ScrollPart>
        <Spacer />
        <ScrollPart $h={25}><Chevron dir="down" /></ScrollPart>
      </ScrollTrack>
      <ScrollTrack>
        <ScrollPart $w={25} $ml={1}><Chevron dir="left" /></ScrollPart>
        <ScrollPart $w={107} $ml={1}><Ridges /></ScrollPart>
        <Spacer />
        <ScrollPart $w={25}><Chevron dir="right" /></ScrollPart>
      </ScrollTrack>
    </TreePanel>
  )
}

function Backtest() {
  return (
    <SidePanel>
      <PanelHeader>
        Backtest
        <Spacer />
        <PinIcon />
        <CloseBox>×</CloseBox>
      </PanelHeader>
      <StrategyRow>
        <StrategyLabel>Strategy:</StrategyLabel>
        <Select>
          MAMATest
          <span><Chevron dir="down" /></span>
        </Select>
      </StrategyRow>
      <PropertyGrid>
        {PROPERTIES.map(group => (
          <React.Fragment key={group.title}>
            <Category>
              <Toggle $dark />
              {group.title}
            </Category>
            {group.rows.map(([name, value]) => (
              <PropertyRow key={name}>
                <div />
                <PropertyName $selected={name === "From"}>{name}</PropertyName>
                <PropertyValue>{value}</PropertyValue>
              </PropertyRow>
            ))}
          </React.Fragment>
        ))}
      </PropertyGrid>
      <HelpBox>
        <b>From</b>
        <div>From date.</div>
      </HelpBox>
      <RunButton>Run Backtest</RunButton>
    </SidePanel>
  )
}

function TrayIcons() {
  return (
    <svg width="138" height="22" viewBox="0 0 138 22">
      <ellipse cx="11" cy="11" rx="10.500" ry="8.500" fill="#0c3c64" />
      <path d="M0 7h22M0 11h22M0 15h22" stroke="#2a7cb0" strokeWidth=".8" />
      <path d="M8 6v9h7" fill="none" stroke="#fff" strokeWidth="3.500" />
      <path d="M25 3h12v9H25z" fill="#f4f4ee" stroke="#222" />
      <path d="M28 17h10M26 20h10M35 12v3h3V5" stroke="#222" fill="none" strokeDasharray="2 1" />
      <path d="M45 5h9v6h-9zM49 11h9v6h-9z" fill="#3c5c8c" stroke="#b8c4d8" />
      <path d="M57 5q3 3 0 6M60 3q4 5 0 10" fill="none" stroke="#d8e8fc" />
      <path d="M67 7h9v6h-9zM71 3h11v8H71z" fill="#2c3c84" stroke="#a8b0d0" />
      <path d="M76 11l8 8M84 11l-8 8" stroke="#f03020" strokeWidth="2.600" />
      <path d="M90 5h7l4 5 5 5-3 2-6-5h-5z" fill="#f4d83c" stroke="#7a6410" />
      <circle cx="104" cy="6" r="4.500" fill="#d01c1c" />
      <path d="M102 4l4 4M106 4l-4 4" stroke="#fff" />
    </svg>
  )
}

const TASKS = [
  ["Plotting Pr...", FirefoxIcon],
  ["Control Ce...", NinjaIcon],
  ["Output", OutputIcon],
  ["MAMATest...", AppIcon],
  ["Strategy - ...", PageIcon],
  ["My Pictures", PicturesIcon],
  ["plotProble...", ImageIcon],
]

function Taskbar() {
  return (
    <TaskbarRoot>
      <StartButton>
        <WindowsFlag />
        start
      </StartButton>
      <QuickLaunch>
        <DarkGrip />
        <IeIcon />
        <OutlookIcon />
        <FirefoxIcon />
        <MatlabIcon />
        <MediaIcon />
        <More>»</More>
        <DarkGrip />
      </QuickLaunch>
      {TASKS.map(([label, Icon]) => (
        <Task key={label} $active={label === "MAMATest..."}>
          <TaskIcon><Icon /></TaskIcon>
          {label}
        </Task>
      ))}
      <Tray>
        <Collapse>
          <svg width="8" height="8" viewBox="0 0 8 8">
            <path d="M5.500 1L2.500 4l3 3" fill="none" stroke="#fff" strokeWidth="1.700" />
          </svg>
        </Collapse>
        <TrayIcons />
        <Clock>7:19 PM</Clock>
      </Tray>
    </TaskbarRoot>
  )
}

export default function App() {
  return (
    <Screen>
      <GlobalStyle />
      <TitleBar>
        <AppIcon size={18} />
        <WindowTitle>MAMATest - BRF [9/7/2010] - Strategy Analyzer</WindowTitle>
        <WindowButton>
          <svg width="20" height="20" viewBox="0 0 20 20">
            <path d="M2 16h11" stroke="#fff" strokeWidth="4" />
          </svg>
        </WindowButton>
        <WindowButton>
          <svg width="20" height="20" viewBox="0 0 20 20" fill="none" stroke="#fff" strokeWidth="1.800">
            <path d="M1 9h12v10H1zM6 8V2h13v11h-5M1 9.800h12M6 2.800h13" />
          </svg>
        </WindowButton>
        <WindowButton $close>
          <svg width="20" height="20" viewBox="0 0 20 20">
            <path d="M2 2l16 16M18 2L2 18" stroke="#fff" strokeWidth="3.600" />
          </svg>
        </WindowButton>
      </TitleBar>
      <MainToolbar />
      <Body>
        <Tree />
        <Splitter />
        <ChartArea>
          <TabStrip>
            {TABS.map(([label, width]) => (
              <Tab key={label} $w={width} $active={label === "Chart"}>
                {label}
              </Tab>
            ))}
          </TabStrip>
          <ChartFrame>
            <ChartToolbar />
            <Chart />
            <HorizontalScroll>
              <ScrollPart $w={25}><Chevron dir="left" /></ScrollPart>
              <Spacer />
              <ScrollPart $w={315}><Ridges /></ScrollPart>
              <ScrollPart $w={25} $ml={1}><Chevron dir="right" /></ScrollPart>
            </HorizontalScroll>
          </ChartFrame>
        </ChartArea>
        <Backtest />
      </Body>
      <Taskbar />
    </Screen>
  )
}
